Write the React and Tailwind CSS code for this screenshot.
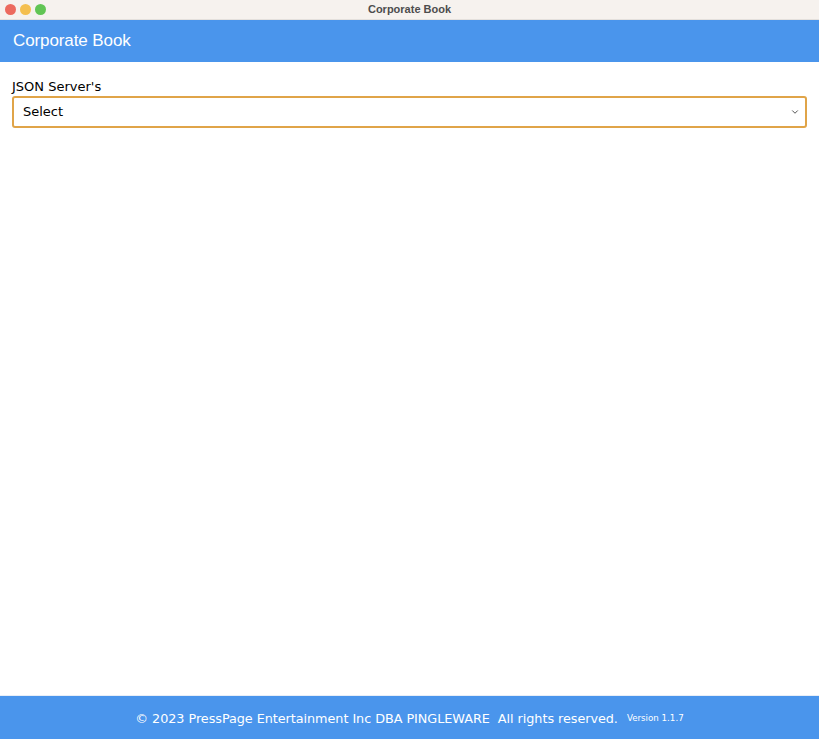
import { ChevronDown } from 'lucide-react';

export default function App() {
    return (
        <div className="flex h-screen flex-col bg-white" style={{ fontFamily: '"DejaVu Sans", Verdana, sans-serif' }}>
            {/* Window title bar */}
            <div className="relative flex h-[20px] flex-shrink-0 items-center justify-center bg-[#f6f2ee] border-b border-[#e4e0dc]">
                <div className="absolute left-[5px] top-[4px] flex gap-[4px]">
                    <span className="h-[11px] w-[11px] rounded-full bg-[#ec6a5e]" />
                    <span className="h-[11px] w-[11px] rounded-full bg-[#f4bf4f]" />
                    <span className="h-[11px] w-[11px] rounded-full bg-[#61c554]" />
                </div>
                <span className="text-[11px] font-bold text-[#4d4d4d]" style={{ fontFamily: '"Liberation Sans", Arial, sans-serif' }}>
                    Corporate Book
                </span>
            </div>

            {/* App header */}
            <header className="flex h-[42px] flex-shrink-0 items-center bg-[#4a95ec] px-[13px]">
                <h1 className="text-[17px] tracking-[-0.1px] text-white" style={{ fontFamily: '"Liberation Sans", Arial, sans-serif' }}>
                    Corporate Book
                </h1>
            </header>

            {/* Main */}
            <main className="flex-1 px-[12px] pt-[16px]">
                <label className="block text-[13px] leading-[17px] text-black">JSON Server's</label>
                <div className="mt-[1px] flex h-[32px] items-center rounded-[3px] border-2 border-[#e0a448] pl-[9px] pr-[5px]">
                    <span className="flex-1 text-[13px] text-black">Select</span>
                    <ChevronDown className="h-[10px] w-[10px] text-[#444]" strokeWidth={2.2} />
                </div>
            </main>

            {/* Footer */}
            <footer className="flex h-[44px] flex-shrink-0 items-center justify-center border-t border-[#e8eef7] bg-[#4a95ec] pt-[3px] text-white">
                <span className="text-[12.8px] tracking-[-0.05px]">© 2023 PressPage Entertainment Inc DBA PINGLEWARE&nbsp; All rights reserved.</span>
                <span className="ml-[9px] text-[8.7px]">Version 1.1.7</span>
            </footer>
        </div>
    );
}
